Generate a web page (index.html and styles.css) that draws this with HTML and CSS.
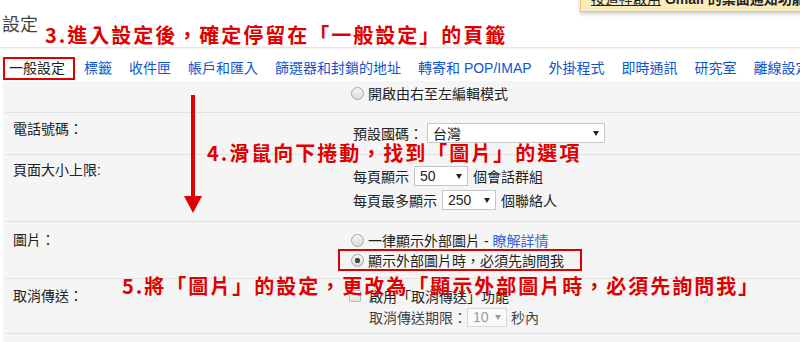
FILE: index.html
```html
<!DOCTYPE html>
<html>
<head>
<meta charset="UTF-8">
<title>設定</title>
<link rel="stylesheet" href="styles.css">
</head>
<body>

<header class="top">
  <h1 class="title">設定</h1>
  <div class="notice"><a href="#">按這裡啟用</a> Gmail 的桌面通知功能。</div>
</header>

<nav class="tabs">
  <a class="tab current" href="#">一般設定</a>
  <a class="tab" href="#">標籤</a>
  <a class="tab" href="#">收件匣</a>
  <a class="tab" href="#">帳戶和匯入</a>
  <a class="tab" href="#">篩選器和封鎖的地址</a>
  <a class="tab" href="#">轉寄和 POP/IMAP</a>
  <a class="tab" href="#">外掛程式</a>
  <a class="tab" href="#">即時通訊</a>
  <a class="tab" href="#">研究室</a>
  <a class="tab" href="#">離線設定</a>
</nav>

<div class="content">
  <!-- 編輯模式 (上半部已捲出畫面) -->
  <div class="row r1">
    <div class="label"></div>
    <div class="value">
      <div class="opt"><span class="radio"></span>開啟由右至左編輯模式</div>
    </div>
  </div>

  <div class="row r2">
    <div class="label up">電話號碼：</div>
    <div class="value">
      <div class="line">預設國碼：<span class="select w-country">台灣<span class="caret"></span></span></div>
    </div>
  </div>

  <div class="row r3">
    <div class="label up">頁面大小上限:</div>
    <div class="value">
      <div class="line tall">每頁顯示<span class="select w-num">50<span class="caret"></span></span>個會話群組</div>
      <div class="line tall">每頁最多顯示<span class="select w-num">250<span class="caret"></span></span>個聯絡人</div>
    </div>
  </div>

  <div class="row r4">
    <div class="label">圖片：</div>
    <div class="value">
      <div class="opt"><span class="radio"></span>一律顯示外部圖片 - <a class="link" href="#">瞭解詳情</a></div>
      <div class="opt boxed"><span class="radio on"></span>顯示外部圖片時，必須先詢問我</div>
    </div>
  </div>

  <div class="row r5">
    <div class="label">取消傳送：</div>
    <div class="value">
      <div class="opt"><span class="check"></span>啟用「取消傳送」功能</div>
      <div class="line sub">取消傳送期限：<span class="select w-sec disabled">10<span class="caret"></span></span>秒內</div>
    </div>
  </div>
</div>

<!-- 教學標註 -->
<p class="note note3">3.進入設定後，確定停留在「一般設定」的頁籤</p>
<p class="note note4">4.滑鼠向下捲動，找到「圖片」的選項</p>
<p class="note note5">5.將「圖片」的設定，更改為「顯示外部圖片時，必須先詢問我」</p>
<svg class="arrow" width="20" height="119" viewBox="0 0 20 119">
  <rect x="8" y="0" width="4" height="103" fill="#e00000"/>
  <polygon points="1,101 19,101 10,118" fill="#e00000"/>
</svg>

</body>
</html>
```

FILE: styles.css
```css
html, body {margin: 0; overflow: hidden;}
body {
  position: relative;
  width: 800px;
  height: 342px;
  background: #fff;
  color: #222;
  font-family: "Liberation Sans", "Noto Sans CJK TC", sans-serif;
  font-size: 14px;
}

/* en-tête */
.top {height: 47px; border-bottom: 1px solid #e6e6e6; box-shadow: 0 1px 2px rgba(0,0,0,.06);}
.title {margin: 0; padding: 16px 0 0 2px; font-size: 18px; line-height: 18px; font-weight: normal; color: #444;}
.notice {
  position: absolute;
  top: -9px;
  left: 580px;
  padding: 0 10px 5px;
  line-height: 14px;
  background: #f9edbe;
  border: 1px solid #f0c36d;
  box-shadow: 0 2px 4px rgba(0,0,0,.2);
  font-weight: bold;
  white-space: nowrap;
}
.notice a {color: #222; font-weight: normal; text-decoration: underline;}

/* onglets */
.tabs {display: flex; align-items: baseline; padding: 9px 0 1px 3px; white-space: nowrap; overflow: hidden;}
.tab {padding: 0 8px 0 9px; line-height: 19px; color: #15c; text-decoration: none; flex-shrink: 0;}
.tab.current {padding: 0 8px 0 4px; border: 2px solid #d00; color: #222;}

/* réglages */
.content {margin-left: 3px; height: 261px; background: #f5f5f5;}
.row {display: grid; grid-template-columns: 345px 1fr; margin-left: 2px; border-bottom: 1px solid #e2e2e2;}
.r1 {padding: 2px 0 9px;}
.r2 {padding: 10px 0 11px;}
.r3 {padding: 9px 0;}
.r4 {padding: 8px 0;}
.r5 {padding: 7px 0 5px;}
.label {padding-left: 8px; line-height: 20px;}
.label.up {margin-top: -4px;}

.line {display: flex; align-items: center; height: 20px; padding-left: 3px; white-space: nowrap;}
.line.tall {height: 24px;}
.line.sub {height: 22px; padding-left: 19px; color: #444;}
.opt {position: relative; display: flex; align-items: center; width: max-content; height: 20px; white-space: nowrap;}
.link {color: #3367d6; text-decoration: none; margin-left: 4px;}

.radio {
  box-sizing: border-box;
  width: 13px;
  height: 13px;
  margin: 0 4px 0 1px;
  border: 1px solid #a6a6a6;
  border-radius: 50%;
  background: linear-gradient(#f6f6f6, #dadada);
}
.radio.on {background: radial-gradient(circle, #4a4a4a 0 2.5px, transparent 3px), linear-gradient(#f6f6f6, #dadada);}
.check {
  box-sizing: border-box;
  width: 12px;
  height: 12px;
  margin: 0 8px 0 -1px;
  border: 1px solid #b8b8b8;
  border-radius: 1px;
  background: linear-gradient(#fafafa, #e4e4e4);
}
.boxed::before {
  content: "";
  position: absolute;
  left: -12px;
  right: -18px;
  top: -1px;
  bottom: -1px;
  border: 2px solid #d00;
}

.select {
  box-sizing: border-box;
  display: inline-flex;
  align-items: center;
  justify-content: space-between;
  height: 20px;
  margin: 0 5px;
  padding: 0 5px;
  border: 1px solid #c6c6c6;
  background: #fff;
  color: #222;
}
.caret {width: 0; height: 0; border-left: 3px solid transparent; border-right: 3px solid transparent; border-top: 5px solid #222;}
.w-country {width: 178px; margin-left: 4px;}
.w-num {width: 54px;}
.w-sec {width: 40px; height: 19px; margin: 0 4px 0 0;}
.select.disabled {border-color: #d8d8d8; background: #fafafa; color: #999;}
.select.disabled .caret {border-top-color: #999;}

/* annotations */
.note {
  position: absolute;
  margin: 0;
  font-family: "Noto Sans CJK TC", "Liberation Sans", sans-serif;
  font-size: 20px;
  line-height: 20px;
  font-weight: bold;
  letter-spacing: 2px;
  color: #e00000;
  white-space: nowrap;
}
.note3 {left: 45px; top: 25px;}
.note4 {left: 207px; top: 143px;}
.note5 {left: 122px; top: 276px;}
.arrow {position: absolute; left: 183px; top: 95px;}
```
